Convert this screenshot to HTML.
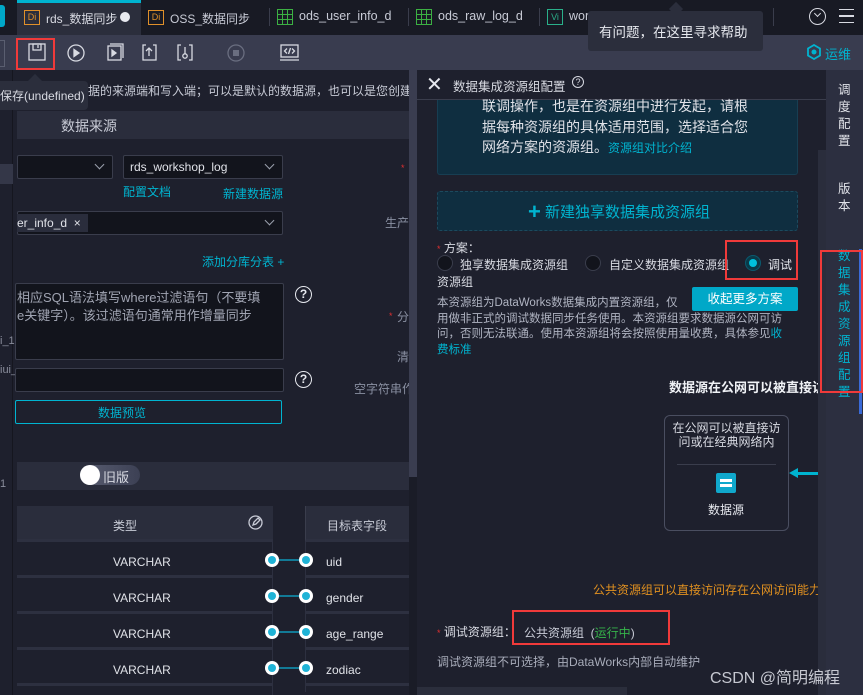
<!DOCTYPE html>
<html><head><meta charset="utf-8"><style>
*{margin:0;padding:0;box-sizing:border-box}
body{width:863px;height:695px;overflow:hidden;background:#1e202d;font-family:"Liberation Sans","Noto Sans CJK SC",sans-serif;font-size:12px;color:#c8cbd6;position:relative}
.a{position:absolute}
.t{white-space:nowrap}
.cy{color:#00b4d0}
.inp{position:absolute;background:#12141c;border:1px solid #3a3d4c;border-radius:2px}
.chev{position:absolute;width:7px;height:7px;border-right:1.5px solid #9aa0ad;border-bottom:1.5px solid #9aa0ad;transform:rotate(45deg)}
.q{position:absolute;width:17px;height:17px;border:1.5px solid #e6e8ee;border-radius:50%;color:#e6e8ee;font-size:12px;font-weight:bold;text-align:center;line-height:14px}
.row{position:absolute;left:17px;width:256px;height:36px;border-bottom:3px solid #2d3040}
.dot{position:absolute;width:14px;height:14px;border-radius:50%;background:#fff}
.dot:after{content:"";position:absolute;left:3px;top:3px;width:8px;height:8px;border-radius:50%;background:#1fb3d6}
.red{position:absolute;border:2px solid #f03a3a}
</style></head><body>
<!-- top bar -->
<div class="a" style="left:0;top:0;width:863px;height:35px;background:#181a24"></div>
<div class="a" style="left:0;top:5px;width:5px;height:22px;background:#00a8c8;border-radius:0 3px 3px 0"></div>
<div class="a" style="left:17px;top:0;width:124px;height:35px;background:#2b2e3c;border-top:3px solid #00b4d0"></div>
<div class="a t" style="left:24px;top:10px;width:16px;height:15px;border:1px solid #e0902a;color:#e0902a;font-size:9px;text-align:center;line-height:13px">Di</div>
<div class="a t" style="left:46px;top:10px;font-size:12px;color:#d8dae2">rds_数据同步</div>
<div class="a" style="left:120px;top:12px;width:10px;height:10px;border-radius:50%;background:#e8eaf0"></div>
<div class="a t" style="left:148px;top:10px;width:16px;height:15px;border:1px solid #e0902a;color:#e0902a;font-size:9px;text-align:center;line-height:13px">Di</div>
<div class="a t" style="left:170px;top:10px;font-size:12px;color:#c8cbd6">OSS_数据同步</div>
<div class="a" style="left:269px;top:8px;width:1px;height:18px;background:#3a3d4c"></div>
<div class="a" style="left:277px;top:9px;width:16px;height:16px;border:1.5px solid #3cb043;background:repeating-linear-gradient(0deg,transparent 0 4px,#3cb043 4px 5px),repeating-linear-gradient(90deg,transparent 0 4px,#3cb043 4px 5px)"></div>
<div class="a t" style="left:299px;top:9px;font-size:12.5px">ods_user_info_d</div>
<div class="a" style="left:408px;top:8px;width:1px;height:18px;background:#3a3d4c"></div>
<div class="a" style="left:416px;top:9px;width:16px;height:16px;border:1.5px solid #3cb043;background:repeating-linear-gradient(0deg,transparent 0 4px,#3cb043 4px 5px),repeating-linear-gradient(90deg,transparent 0 4px,#3cb043 4px 5px)"></div>
<div class="a t" style="left:438px;top:9px;font-size:12.5px">ods_raw_log_d</div>
<div class="a" style="left:539px;top:8px;width:1px;height:18px;background:#3a3d4c"></div>
<div class="a t" style="left:547px;top:9px;width:16px;height:16px;border:1px solid #2ab08a;color:#2ab08a;font-size:9px;text-align:center;line-height:14px">Vi</div>
<div class="a t" style="left:569px;top:9px;font-size:12.5px">wor</div>
<div class="a" style="left:773px;top:8px;width:1px;height:18px;background:#3a3d4c"></div>
<div class="a" style="left:809px;top:8px;width:17px;height:17px;border:1.5px solid #d8dae2;border-radius:50%"></div>
<div class="a" style="left:815px;top:11px;width:5px;height:5px;border-right:1.5px solid #d8dae2;border-bottom:1.5px solid #d8dae2;transform:rotate(45deg)"></div>
<div class="a" style="left:839px;top:9px;width:15px;height:14px;border-top:1.5px solid #d8dae2;border-bottom:1.5px solid #d8dae2"></div>
<div class="a" style="left:839px;top:15px;width:15px;height:1.5px;background:#d8dae2"></div>
<!-- toolbar -->
<div class="a" style="left:0;top:35px;width:863px;height:35px;background:#393c4f"></div>
<div class="a" style="left:0;top:40px;width:5px;height:27px;border:1px solid #5a5e70;border-left:none"></div>
<svg class="a" style="left:25px;top:40px" width="300" height="26" viewBox="0 0 300 26" fill="none" stroke="#d8dae2" stroke-width="1.3">
<rect x="4" y="4" width="16" height="16"/><rect x="8" y="4" width="8" height="6"/><line x1="13" y1="5" x2="13" y2="8"/>
<circle cx="51" cy="13" r="8"/><path d="M49 9.5v7l5-3.5z" fill="#d8dae2"/>
<rect x="83" y="6" width="13" height="14"/><path d="M85 4h13v14" /><path d="M87 10v6l4-3z" fill="#d8dae2"/>
<path d="M121 5h-3v15h13V5h-3"/><path d="M124 16V8m-3 3l3-3 3 3"/>
<path d="M156 5h-3v15h3M164 5h3v15h-3"/><circle cx="160" cy="16" r="2.2"/><path d="M160 14V7"/>
<circle cx="211" cy="13" r="8" stroke="#6a6e80"/><rect x="208" y="10" width="6" height="6" fill="#6a6e80" stroke="none"/>
<rect x="256" y="5" width="17" height="12"/><path d="M255 20h19"/><path d="M262 8.5l-2.5 2.5 2.5 2.5M267 8.5l2.5 2.5-2.5 2.5M265.5 8l-2 6"/>
</svg>
<div class="red" style="left:16px;top:38px;width:39px;height:32px"></div>
<svg class="a" style="left:806px;top:44px" width="16" height="16" viewBox="0 0 16 16"><path d="M8 1l6 3.5v7L8 15l-6-3.5v-7z" fill="none" stroke="#00b4d0" stroke-width="1.8"/><circle cx="8" cy="8" r="2.5" fill="#00b4d0"/></svg>
<div class="a t cy" style="left:825px;top:44px;font-size:13px">运维</div>
<!-- left strip -->
<div class="a" style="left:0;top:70px;width:13px;height:625px;background:#1e202d;border-right:1px solid #15161f"></div>
<div class="a" style="left:0;top:164px;width:13px;height:20px;background:#343748"></div>
<div class="a t" style="left:0;top:335px;font-size:11px;color:#8a8e9c">i_1</div>
<div class="a t" style="left:0;top:364px;font-size:11px;color:#8a8e9c">iui_</div>
<div class="a t" style="left:0;top:478px;font-size:11px;color:#8a8e9c">1</div>
<!-- main content -->
<div class="a" style="left:17px;top:70px;width:392px;height:625px;background:#1e202d"></div>
<div class="a t" style="left:88px;top:82px;color:#c8cbd6">据的来源端和写入端；可以是默认的数据源，也可以是您创建</div>
<div class="a" style="left:17px;top:111px;width:392px;height:28px;background:#2a2d3c"></div>
<div class="a t" style="left:61px;top:116px;font-size:14px;color:#c8cbd6">数据来源</div>
<div class="inp" style="left:17px;top:155px;width:96px;height:24px"></div><div class="chev" style="left:96px;top:161px"></div>
<div class="inp" style="left:123px;top:155px;width:160px;height:24px"></div>
<div class="a t" style="left:130px;top:160px;font-size:12px;color:#e0e2e8">rds_workshop_log</div><div class="chev" style="left:266px;top:161px"></div>
<div class="a t cy" style="left:123px;top:183px">配置文档</div>
<div class="a t cy" style="left:223px;top:185px">新建数据源</div>
<div class="a" style="left:401px;top:163px;color:#e03030;font-size:9px">*</div>
<div class="a t" style="left:385px;top:214px;color:#8a90a2">生产</div>
<div class="inp" style="left:17px;top:211px;width:266px;height:24px"></div>
<div class="a" style="left:17px;top:214px;width:71px;height:18px;background:#2a2d3c"></div>
<div class="a t" style="left:17px;top:216px;font-size:12px;color:#e0e2e8">er_info_d &nbsp;×</div>
<div class="chev" style="left:266px;top:217px"></div>
<div class="a t cy" style="left:202px;top:253px">添加分库分表 +</div>
<div class="inp" style="left:15px;top:283px;width:269px;height:77px"></div>
<div class="a" style="left:17px;top:289px;color:#a0a4b2;font-size:13px;line-height:18px;white-space:nowrap">相应SQL语法填写where过滤语句（不要填<br>e关键字）。该过滤语句通常用作增量同步</div>
<div class="q" style="left:295px;top:286px">?</div>
<div class="a" style="left:389px;top:311px;color:#e03030;font-size:9px">*</div>
<div class="a t" style="left:397px;top:308px;color:#8a90a2">分</div>
<div class="a t" style="left:397px;top:348px;color:#8a90a2">清</div>
<div class="inp" style="left:15px;top:368px;width:269px;height:24px"></div>
<div class="q" style="left:295px;top:371px">?</div>
<div class="a t" style="left:354px;top:380px;color:#8a90a2">空字符串作</div>
<div class="a" style="left:15px;top:400px;width:267px;height:24px;border:1px solid #00b4d0;border-radius:2px"></div>
<div class="a t cy" style="left:98px;top:404px">数据预览</div>
<div class="a" style="left:17px;top:462px;width:392px;height:28px;background:#2a2d3c"></div>
<div class="a" style="left:80px;top:465px;width:60px;height:20px;border-radius:10px;background:linear-gradient(90deg,#5a5e72,#3c4054)"></div>
<div class="a" style="left:80px;top:465px;width:20px;height:20px;border-radius:50%;background:#fff"></div>
<div class="a t" style="left:103px;top:467px;font-size:13px;color:#d8dae2">旧版</div>
<div class="a" style="left:17px;top:506px;width:256px;height:36px;background:#2a2d3c;border-bottom:3px solid #2d3040"></div>
<div class="a t" style="left:113px;top:517px;color:#c8cbd6">类型</div>
<svg class="a" style="left:248px;top:515px" width="15" height="15" viewBox="0 0 15 15" fill="none" stroke="#c8cbd6" stroke-width="1.3"><circle cx="7.5" cy="7.5" r="6.5"/><path d="M5 10l1-3 4-4 2 2-4 4z"/></svg>
<div class="a" style="left:305px;top:506px;width:104px;height:36px;background:#2a2d3c;border-bottom:3px solid #2d3040;border-left:1px solid #3a3d4c"></div>
<div class="a t" style="left:327px;top:517px;color:#c8cbd6">目标表字段</div>
<div class="a" style="left:272px;top:542px;width:1px;height:153px;background:#2d3040"></div>
<div class="a" style="left:305px;top:542px;width:1px;height:150px;background:#2d3040"></div>
<div class="row" style="top:542px"></div><div class="row" style="top:578px"></div><div class="row" style="top:614px"></div><div class="row" style="top:650px"></div>
<div class="a" style="left:305px;top:542px;width:104px;height:36px;border-bottom:3px solid #2d3040"></div>
<div class="a" style="left:305px;top:578px;width:104px;height:36px;border-bottom:3px solid #2d3040"></div>
<div class="a" style="left:305px;top:614px;width:104px;height:36px;border-bottom:3px solid #2d3040"></div>
<div class="a" style="left:305px;top:650px;width:104px;height:36px;border-bottom:3px solid #2d3040"></div>
<div class="a t" style="left:113px;top:555px;color:#e0e2e8">VARCHAR</div><div class="a t" style="left:326px;top:555px;color:#e0e2e8">uid</div>
<div class="a t" style="left:113px;top:591px;color:#e0e2e8">VARCHAR</div><div class="a t" style="left:326px;top:591px;color:#e0e2e8">gender</div>
<div class="a t" style="left:113px;top:627px;color:#e0e2e8">VARCHAR</div><div class="a t" style="left:326px;top:627px;color:#e0e2e8">age_range</div>
<div class="a t" style="left:113px;top:663px;color:#e0e2e8">VARCHAR</div><div class="a t" style="left:326px;top:663px;color:#e0e2e8">zodiac</div>
<div class="a" style="left:278px;top:559px;width:28px;height:2px;background:#127a96"></div><div class="dot" style="left:265px;top:553px"></div><div class="dot" style="left:299px;top:553px"></div>
<div class="a" style="left:278px;top:595px;width:28px;height:2px;background:#127a96"></div><div class="dot" style="left:265px;top:589px"></div><div class="dot" style="left:299px;top:589px"></div>
<div class="a" style="left:278px;top:631px;width:28px;height:2px;background:#127a96"></div><div class="dot" style="left:265px;top:625px"></div><div class="dot" style="left:299px;top:625px"></div>
<div class="a" style="left:278px;top:667px;width:28px;height:2px;background:#127a96"></div><div class="dot" style="left:265px;top:661px"></div><div class="dot" style="left:299px;top:661px"></div>
<!-- scrollbar -->
<div class="a" style="left:409px;top:70px;width:8px;height:407px;background:#3a3d50"></div>
<div class="a" style="left:409px;top:477px;width:8px;height:218px;background:#1a1c27"></div>
<!-- save tooltip -->
<div class="a" style="left:30px;top:76px;width:10px;height:10px;background:#2b2e3c;transform:rotate(45deg)"></div>
<div class="a t" style="left:0;top:81px;width:88px;height:29px;background:#2b2e3c;border-radius:0 4px 4px 0;padding:6px 0 0 0;color:#d8dae2">保存(undefined)</div>
<!-- drawer -->
<div class="a" style="left:417px;top:70px;width:413px;height:625px;background:#1e202d"></div>
<div class="a" style="left:417px;top:99px;width:413px;height:1px;background:#3a3d4c"></div>
<div class="a" style="left:426px;top:76px;font-size:20px;color:#e6e8ee;line-height:18px">✕</div>
<div class="a t" style="left:453px;top:76px;color:#d8dae2;font-size:12.5px">数据集成资源组配置</div>
<div class="a" style="left:572px;top:76px;width:12px;height:12px;border:1px solid #d8dae2;border-radius:50%;font-size:9px;text-align:center;line-height:10px;color:#d8dae2">?</div>
<div class="a" style="left:437px;top:100px;width:361px;height:75px;background:#0f2e40;border:1px solid #173e52;border-top:none;border-radius:0 0 3px 3px"></div>
<div class="a" style="left:482px;top:96px;font-size:14px;line-height:20.5px;color:#e0e2e8;white-space:nowrap">联调操作，也是在资源组中进行发起，请根<br>据每种资源组的具体适用范围，选择适合您<br>网络方案的资源组。<span class="cy" style="font-size:12px">资源组对比介绍</span></div>
<div class="a" style="left:437px;top:191px;width:361px;height:40px;background:#0f2e40;border:1px dashed #1c4a5e;border-radius:3px"></div>
<div class="a t cy" style="left:528px;top:199px;font-size:15px"><span style="font-size:22px;font-weight:bold;vertical-align:-2px">+</span> 新建独享数据集成资源组</div>
<div class="a t" style="left:437px;top:239px;color:#d8dae2"><span style="color:#e03030;font-size:9px">*</span> 方案：</div>
<div class="a" style="left:437px;top:255px;width:16px;height:16px;border-radius:50%;background:#12141c;border:1px solid #3a3d4c"></div>
<div class="a t" style="left:460px;top:256px;color:#d8dae2">独享数据集成资源组</div>
<div class="a" style="left:585px;top:255px;width:16px;height:16px;border-radius:50%;background:#12141c;border:1px solid #3a3d4c"></div>
<div class="a t" style="left:609px;top:256px;color:#d8dae2">自定义数据集成资源组</div>
<div class="a" style="left:745px;top:255px;width:16px;height:16px;border-radius:50%;background:#0a3a48;border:1px solid #0a5a70"></div>
<div class="a" style="left:749px;top:259px;width:8px;height:8px;border-radius:50%;background:#00c0dc"></div>
<div class="a t" style="left:768px;top:256px;color:#e6e8ee">调试</div>
<div class="red" style="left:725px;top:240px;width:73px;height:40px"></div>
<div class="a t" style="left:437px;top:273px;color:#d8dae2">资源组</div>
<div class="a" style="left:692px;top:287px;width:106px;height:24px;background:#00a8c8;border-radius:2px;color:#fff;text-align:center;line-height:24px;font-size:12.5px">收起更多方案</div>
<div class="a" style="left:437px;top:296px;font-size:11.5px;line-height:15.5px;color:#b0b4c2;white-space:nowrap">本资源组为DataWorks数据集成内置资源组，仅<br>用做非正式的调试数据同步任务使用。本资源组要求数据源公网可访<br>问，否则无法联通。使用本资源组将会按照使用量收费，具体参见<span class="cy">收</span><br><span class="cy">费标准</span></div>
<div class="a t" style="left:669px;top:377px;font-size:13px;font-weight:bold;color:#f0f2f6;width:150px;overflow:hidden">数据源在公网可以被直接访问</div>
<div class="a" style="left:664px;top:415px;width:125px;height:116px;border:1px solid #4a4e60;border-radius:6px"></div>
<div class="a" style="left:666px;top:421px;width:121px;text-align:center;font-size:12px;line-height:14px;color:#d8dae2">在公网可以被直接访<br>问或在经典网络内</div>
<div class="a" style="left:677px;top:464px;width:99px;height:1px;background:#3a3d4c"></div>
<div class="a" style="left:716px;top:473px;width:20px;height:20px;background:#10a8cc;border-radius:2px"></div>
<div class="a" style="left:720px;top:479px;width:12px;height:3px;background:#fff"></div>
<div class="a" style="left:720px;top:484px;width:12px;height:3px;background:#fff"></div>
<div class="a t" style="left:708px;top:501px;font-size:12px;color:#e6e8ee">数据源</div>
<div class="a" style="left:797px;top:472px;width:22px;height:3px;background:#00b4d0"></div>
<div class="a" style="left:789px;top:468px;width:0;height:0;border-top:5px solid transparent;border-bottom:5px solid transparent;border-right:9px solid #00b4d0"></div>
<div class="a t" style="left:593px;top:581px;color:#e09020;width:226px;overflow:hidden">公共资源组可以直接访问存在公网访问能力</div>
<div class="a t" style="left:437px;top:623px;color:#d8dae2"><span style="color:#e03030;font-size:9px">*</span> 调试资源组：</div>
<div class="a t" style="left:524px;top:624px;color:#c8cbd6">公共资源组 &nbsp;(<span style="color:#36b34a">运行中</span>)</div>
<div class="red" style="left:512px;top:610px;width:158px;height:35px"></div>
<div class="a t" style="left:437px;top:653px;color:#a8acba">调试资源组不可选择，由DataWorks内部自动维护</div>
<div class="a" style="left:417px;top:687px;width:210px;height:8px;background:#2b2e3c"></div>
<div class="a" style="left:818px;top:150px;width:8px;height:545px;background:#2a2d3c"></div>
<!-- right sidebar -->
<div class="a" style="left:826px;top:70px;width:37px;height:625px;background:#2c2f40"></div>
<div class="a" style="left:859px;top:249px;width:3px;height:165px;background:#3a6ad8"></div>
<div class="a" style="left:838px;top:82px;width:14px;font-size:12.5px;line-height:17px;color:#e0e2e8">调度配置</div>
<div class="a" style="left:838px;top:181px;width:14px;font-size:12.5px;line-height:17px;color:#e0e2e8">版本</div>
<div class="a" style="left:838px;top:248px;width:14px;font-size:12.5px;line-height:17px;color:#00b4d0">数据集成资源组配置</div>
<div class="red" style="left:820px;top:250px;width:43px;height:143px"></div>
<!-- help tooltip -->
<div class="a" style="left:671px;top:4px;width:10px;height:10px;background:#2b2e3c;transform:rotate(45deg)"></div>
<div class="a t" style="left:588px;top:11px;width:175px;height:40px;background:#2b2e3c;border-radius:3px;color:#e6e8ee;font-size:13.5px;padding:10px 0 0 11px">有问题，在这里寻求帮助</div>
<div class="a t" style="left:710px;top:664px;font-size:16px;color:#d8dae2;opacity:.9">CSDN @简明编程</div>
</body></html>
